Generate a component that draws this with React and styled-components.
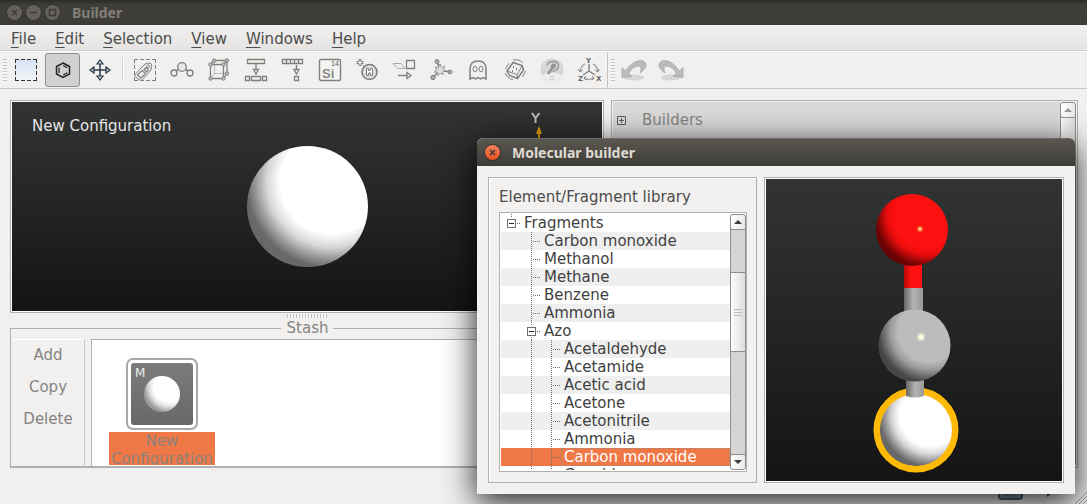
import React from 'react';
import styled, { createGlobalStyle } from 'styled-components';

const GlobalStyle = createGlobalStyle`
  * {
    box-sizing: border-box;
  }

  body {
    margin: 0;
    font-family: "DejaVu Sans", sans-serif;
    font-size: 15px;
    line-height: 18px;
    color: #4c4c4c;
    background: #f1f0ee;
  }

  button {
    font: inherit;
    color: inherit;
    border: 0;
    padding: 0;
    background: none;
    cursor: pointer;
  }
`;

// Main window
const Window = styled.div`
  position: relative;
  display: flex;
  flex-direction: column;
  min-height: 100vh;
  overflow: hidden;
`;

const TitleBar = styled.header`
  display: flex;
  align-items: center;
  gap: 4px;
  height: 25px;
  padding: 0 7px;
  background: linear-gradient(#2c2b28, #403f3b 5px, #3c3b37);
`;

const WindowTitle = styled.h1`
  margin: 0 0 0 8px;
  font-family: "Noto Sans", sans-serif;
  font-size: 14px;
  line-height: 18px;
  font-weight: 700;
  color: #817e76;
`;

const WindowButton = styled.button`
  display: flex;
  width: 15px;
  height: 15px;
  border-radius: 50%;
  background: ${props => (props.$active ? 'linear-gradient(#f58260, #e2501c)' : '#64625b')};
  box-shadow: 0 0 0 1px ${props => (props.$active ? '#35332e' : '#363530')};
  color: #3b3834;
`;

const MenuBar = styled.nav`
  display: flex;
  align-items: center;
  gap: 19px;
  height: 26px;
  padding: 3px 11px 0;
  background: linear-gradient(#f1f0ef, #e5e4e3);
  border-bottom: 1px solid #cfcecd;

  u {
    text-underline-offset: 3px;
    text-decoration-thickness: 1px;
    text-decoration-skip-ink: none;
  }
`;

const ToolRow = styled.div`
  display: flex;
  height: 38px;
  border-top: 1px solid #fff;
  border-bottom: 1px solid #c9c8c6;
`;

const ToolBar = styled.div`
  display: flex;
  align-items: center;
  gap: 2px;
  padding: 0 1px 0 3px;
  border-right: ${props => (props.$last ? '0' : '1px solid #c4c3c1')};
`;

const Handle = styled.div`
  width: 4px;
  height: 22px;
  margin-right: -1px;
  background: repeating-linear-gradient(#c2c1bf 0 1px, #f8f8f7 1px 3px);
`;

const ToolButton = styled.button`
  display: flex;
  align-items: center;
  justify-content: center;
  width: 35px;
  height: 34px;
  border: 1px solid ${props => (props.$pressed ? '#8f8e8c' : 'transparent')};
  border-radius: 3px;
  background: ${props => (props.$pressed ? '#d2d1cf' : 'none')};
`;

const Separator = styled.div`
  width: 2px;
  height: 24px;
  margin: 0 1px 0 3px;
  border-left: 1px solid #d3d2d0;
  border-right: 1px solid #fff;
`;

const Workspace = styled.main`
  display: grid;
  grid-template-columns: 594fr 467fr;
  gap: 7px;
  padding: 11px 9px 36px 10px;
`;

const LeftColumn = styled.div`
  display: flex;
  flex-direction: column;
  min-width: 0;
`;

const Frame = styled.div`
  border: 1px solid #b1b0ae;
  background: #fff;
  padding: 1px;
`;

const Viewport = styled.div`
  position: relative;
  height: 209px;
  padding: 15px 20px;
  color: #e6e6e6;
  background: linear-gradient(#323434, #141414);
  overflow: hidden;
`;

// The scene covers the viewport, below its caption
const Scene = styled.svg`
  position: absolute;
  inset: 0;
  width: 100%;
  height: 100%;
`;

const Splitter = styled.div`
  width: 40px;
  height: 4px;
  margin: 1px auto 0;
  background: repeating-linear-gradient(90deg, #c2c1bf 0 1px, #f8f8f7 1px 3px);
`;

const Stash = styled.fieldset`
  display: flex;
  gap: 6px;
  min-width: 0;
  margin: 1px 0 0;
  padding: 2px 1px 0;
  border: 1px solid #b1b0ae;
  border-bottom-width: 2px;
  color: #858482;

  legend {
    margin: 0 auto;
    padding: 0 5px 0 6px;
  }
`;

const StashTools = styled.div`
  display: flex;
  flex-direction: column;
  align-items: center;
  gap: 14px;
  width: 73px;
  padding-top: 6px;
  border-top: 1px solid #fff;
  border-right: 1px solid #c9c8c6;
`;

const StashList = styled.div`
  flex: 1;
  height: 127px;
  padding: 18px 17px 0;
  border: 1px solid #b1b0ae;
  border-bottom: 0;
  background: #fff;
  overflow: hidden;
`;

const StashItem = styled.figure`
  display: flex;
  flex-direction: column;
  align-items: center;
  width: 106px;
  margin: 0;
`;

const Thumbnail = styled.div`
  width: 72px;
  height: 72px;
  padding: 3px;
  border: 2px solid #a8a8a8;
  border-radius: 7px;

  svg {
    display: block;
    border-radius: 3px;
    background: linear-gradient(#7c7c7a, #676765);
  }
`;

const ItemLabel = styled.figcaption`
  width: 100%;
  height: 33px;
  margin-top: 2px;
  text-align: center;
  background: #f07846;
  color: #8c8279;
  overflow: hidden;
`;

const BuildersPanel = styled.section`
  display: flex;
  border: 1px solid #b1b0ae;
  padding: 1px;
`;

const BuildersHeader = styled.div`
  display: flex;
  flex: 1;
  align-items: center;
  gap: 16px;
  height: 36px;
  padding-left: 4px;
  background: #d9d9d9;
  color: #858482;
`;

const ExpandBox = styled.button`
  display: flex;
  width: 9px;
  height: 9px;
  color: #5c5c5c;
`;

const ScrollBar = styled.div`
  display: flex;
  flex-direction: column;
  width: 16px;
  border: 1px solid #8f8e8c;
  border-radius: 3px;
  background: #d6d5d3;
`;

const ScrollButton = styled.button`
  display: flex;
  align-items: center;
  justify-content: center;
  height: 14px;
  border-radius: 3px;
  background: linear-gradient(90deg, #fff, #e9e8e6);
  color: ${props => (props.$dim ? '#9b9a98' : '#3c3c3c')};
`;

const Track = styled.div`
  flex: ${props => props.$size} 0 0;
  box-shadow: ${props => (props.$first ? 'inset 0 1px #8f8e8c' : 'inset 0 -1px #8f8e8c')};
`;

const Thumb = styled.div`
  display: flex;
  align-items: center;
  justify-content: center;
  flex: ${props => props.$size} 0 0;
  border-top: 1px solid #8f8e8c;
  border-bottom: 1px solid #8f8e8c;
  background: linear-gradient(90deg, #fdfdfd, #dddcda);

  &::after {
    content: '';
    width: 8px;
    height: 7px;
    background: repeating-linear-gradient(#bdbcba 0 1px, transparent 1px 3px);
    display: ${props => (props.$grip ? 'block' : 'none')};
  }
`;

const StatusBar = styled.footer`
  position: absolute;
  right: 0;
  bottom: 0;
  display: flex;
  align-items: flex-end;
`;

// Molecular builder dialog, floating over the main window
const Dialog = styled.section`
  position: absolute;
  top: 138px;
  left: 477px;
  right: 12px;
  border-radius: 6px 6px 0 0;
  background: #f2f1ef;
  box-shadow: 0 8px 32px 1px rgba(0, 0, 0, 0.85);
`;

const DialogTitleBar = styled.header`
  display: flex;
  align-items: center;
  gap: 12px;
  height: 28px;
  padding: 0 8px;
  border-top: 1px solid #6b6963;
  border-radius: 6px 6px 0 0;
  background: linear-gradient(#5a574f, #3d3c38);
`;

const DialogTitle = styled.h2`
  margin: 0;
  font-family: "Noto Sans", sans-serif;
  font-size: 14px;
  line-height: 18px;
  font-weight: 700;
  color: #dfdbd2;
`;

const DialogBody = styled.div`
  display: grid;
  grid-template-columns: 269fr 300fr;
  gap: 7px;
  padding: 11px;
`;

const Library = styled.div`
  display: flex;
  flex-direction: column;
  gap: 6px;
  min-width: 0;
  padding: 10px 9px 10px 10px;
  border: 1px solid #b1b0ae;
  box-shadow: inset 1px 1px #fff;
`;

const LibraryTitle = styled.h3`
  margin: 0;
  font-size: 15px;
  line-height: 18px;
  font-weight: 400;
`;

const TreeFrame = styled.div`
  display: flex;
  height: 260px;
  padding: 1px 0 1px 1px;
  border: 1px solid #b1b0ae;
  background: #fff;
`;

const Tree = styled.ul`
  flex: 1;
  min-width: 0;
  margin: 0;
  padding: 0;
  list-style: none;
  color: #3f3f3f;
  overflow: hidden;
`;

const TreeRow = styled.li`
  display: flex;
  height: 18px;
  background: #fff;
  white-space: nowrap;

  &:nth-child(even) {
    background: #efefef;
  }

  &[aria-selected='true'] {
    background: #f07846;
    color: #fff;
  }
`;

const Indent = styled.svg`
  flex: none;
  width: 20px;
  height: 18px;
  color: #6e6e6e;
`;

const RowLabel = styled.span`
  flex: 1;
  padding-left: 3px;
  outline: ${props => (props.$focused ? '1px dotted #a08878' : 'none')};
  outline-offset: -1px;
`;

const Preview = styled.div`
  position: relative;
  height: 100%;
  background: linear-gradient(#323434, #141414);
`;

const menus = ['File', 'Edit', 'Selection', 'View', 'Windows', 'Help'];

const fragments = [
  { name: 'Fragments', level: 0, open: true },
  { name: 'Carbon monoxide', level: 1 },
  { name: 'Methanol', level: 1 },
  { name: 'Methane', level: 1 },
  { name: 'Benzene', level: 1 },
  { name: 'Ammonia', level: 1 },
  { name: 'Azo', level: 1, open: true },
  { name: 'Acetaldehyde', level: 2 },
  { name: 'Acetamide', level: 2 },
  { name: 'Acetic acid', level: 2 },
  { name: 'Acetone', level: 2 },
  { name: 'Acetonitrile', level: 2 },
  { name: 'Ammonia', level: 2 },
  { name: 'Carbon monoxide', level: 2 },
  { name: 'Cyanide', level: 2 },
];

const icons = {
  select: (
    <>
      <defs>
        <linearGradient id="sel" x2="0" y2="1">
          <stop stopColor="#d5e3f3" />
          <stop offset="1" stopColor="#f4f5f7" />
        </linearGradient>
      </defs>
      <path d="M1 1h22v22H1z" fill="url(#sel)" stroke="none" />
      <path d="M1 1.500h22M1 22.500h22M1.500 1v22M22.500 1v22" stroke="#333" strokeDasharray="4 2" />
    </>
  ),
  builder: (
    <g stroke="#222" strokeWidth="1.5">
      <path d="M12 5l6.500 3.500v7.500L12 19.500 5.500 16V8.500z" />
      <path d="M8 9.500v5.500M12.200 7.500l4 2.300M12.200 17l4-2.300" strokeWidth="1.2" />
    </g>
  ),
  move: (
    <g stroke="#2b3a48" strokeWidth="1.2" fill="#c9d4df">
      <path d="M12 5v14M5 12h14" strokeWidth="1.500" />
      <path d="M12 2l-3 4h6zM12 22l-3-4h6zM2 12l4-3v6zM22 12l-4-3v6z" />
    </g>
  ),
  tag: (
    <>
      <path d="M1 1.500h22M1 22.500h22M1.500 1v22M22.500 1v22" strokeDasharray="4 2" />
      <path d="M1.500 17L12 6q4-1.500 6-.5 1.500 2 0 6.500L8.500 22.500q-5-1-7-5.500z" fill="#efefed" />
      <circle cx="15" cy="8.500" r="1.500" />
      <path d="M4.500 17L9 12.500l3.500 3L8 20zM11 11.500l2-2 2.500 2.500-2 2z" strokeWidth="1.2" />
    </>
  ),
  chain: (
    <g strokeWidth="1.300">
      <circle cx="12" cy="9" r="4.300" fill="#e6e6e4" />
      <circle cx="4" cy="15" r="3" />
      <circle cx="20" cy="15" r="3" />
      <path d="M6.500 13L8 11M17.500 13L16 11" />
    </g>
  ),
  cell: (
    <>
      <path d="M7.500 4v11.500H19M4 20l3.500-4.500" stroke="#bbb" />
      <path d="M3.500 6.500h13v14h-13zM3.500 6.500L7 2.500h13v13l-3.500 5M16.500 6.500L20 2.500" strokeWidth="1.300" />
      <g fill="#c4c4c2">
        <circle cx="3.500" cy="6.500" r="1.700" />
        <circle cx="16.500" cy="6.500" r="1.700" />
        <circle cx="3.500" cy="20.500" r="1.700" />
        <circle cx="16.500" cy="20.500" r="1.700" />
        <circle cx="20" cy="2.500" r="1.700" />
        <circle cx="7" cy="2.500" r="1.700" />
        <circle cx="20" cy="15.500" r="1.700" />
      </g>
    </>
  ),
  split: (
    <g strokeWidth="1.300">
      <path d="M3.500 1.500h17v4h-17zM12 6v6M9.500 11.500h5L12 16zM1.500 18.500h4v4h-4zM7.500 18.500h9v4h-9zM18.500 18.500h4v4h-4z" />
    </g>
  ),
  merge: (
    <g strokeWidth="1.300">
      <path d="M1.500 1.500h20v4h-20zM5.500 2v3M9.500 2v3M13.500 2v3M17.500 2v3M15.500 7v5M13 11.500h5L15.500 16zM13.500 18.500h4v4h-4z" />
    </g>
  ),
  element: (
    <>
      <rect x="1.500" y="1.500" width="21" height="21" rx="1.500" fill="#f5f5f4" strokeWidth="1.400" />
      <text x="4" y="20" fontSize="13" fontWeight="700" fontFamily="Liberation Sans, sans-serif" fill="#858583" stroke="none">Si</text>
      <text x="13" y="8" fontSize="7" fontFamily="Liberation Sans, sans-serif" fill="#555" stroke="none">14</text>
    </>
  ),
  hydrogen: (
    <>
      <circle cx="14.500" cy="14" r="7.500" strokeWidth="1.600" fill="#dededc" />
      <path d="M11.500 10.500h2v2h2v-2h2v7h-2v-2.500h-2v2.500h-2z" fill="#fff" />
      <path d="M4 1.500h2v2h2v2H6v2H4v-2H2v-2h2zM7.500 7l2 2" fill="#fff" />
    </>
  ),
  transform: (
    <>
      <path d="M1 5.500h8l4 5H6z" stroke="#aaa" />
      <path d="M14.500 2.500h8v8h-8zM6 17.500h9M15 14.500v6l4-3z" strokeWidth="1.300" />
    </>
  ),
  network: (
    <>
      <path d="M11 12L8 3.500M11 12L4 19.500M11 12l10 2" strokeWidth="1.600" />
      <path d="M11 6l1.400 3.200L16 8l-1.600 3.200L17 13l-3.200.8L14 17l-2.500-2L9 18l-.5-3.500L5 14l3-2-2-3 3.500.5z" fill="#ddd" strokeDasharray="2 1" />
      <circle cx="8" cy="3.500" r="2" fill="#aaa" />
      <circle cx="4" cy="19.500" r="2.200" fill="#aaa" />
      <circle cx="21" cy="14" r="2" fill="#aaa" />
    </>
  ),
  ghost: (
    <>
      <path d="M4 21V11q0-8 8-8t8 8v10l-3-1.500-2.500 1.500-2.500-1.500-2.500 1.500L7 19.500z" strokeWidth="1.500" />
      <ellipse cx="9" cy="11" rx="2" ry="2.800" />
      <ellipse cx="15" cy="11" rx="2" ry="2.800" />
    </>
  ),
  dice: (
    <>
      <path d="M4 13l6-8.500 9 3 1.500 4.500-6 8.500-8-3z" fill="#eee" strokeWidth="1.500" />
      <path d="M19 8l-5 8.500M14 16.500l.5 4M4 13l10 3.500" />
      <path d="M2.500 11l3-5.500M2 15l3 4.500q3 2 5 2M10 2q7-1 10 3M22.500 13l-3 6" />
      <path d="M10 9h1M13 11h1M9 13h1" strokeWidth="1.800" />
    </>
  ),
  probe: (
    <>
      <circle cx="12" cy="12" r="11.500" fill="#d6d6d4" stroke="none" />
      <path d="M2 17q10-5 20 0-4 6.500-10 6.500T2 17z" fill="#eeeeed" stroke="none" />
      <path d="M7 7.500q1-4 6-4 5.500 0 5.500 4.500 0 4-6 5.500" stroke="#a2a2a0" strokeWidth="1.800" />
      <path d="M13 9L8 16" stroke="#979795" strokeWidth="2.800" />
      <circle cx="13.500" cy="8" r="2" fill="#999" stroke="#8a8a88" />
      <circle cx="12" cy="20" r="1.800" fill="#fff" stroke="#c4c4c2" />
    </>
  ),
  axes: (
    <>
      <path d="M12 6v7M12 13l-6 4M12 13l6 4" strokeWidth="1.300" />
      <path d="M8 6q-4 2-5 7M16 6q4 2 5 7M7 20q5 3 10 0" stroke="#aaa" strokeWidth="1.600" />
      <path d="M1 11l2 3 3-2M18 12l3 2 1-3M9 18l-2 2 2 2M15 18l2 2-2 2" />
      <g fontSize="7" fontWeight="700" fontFamily="DejaVu Sans, sans-serif" fill="#666" stroke="none">
        <text x="9" y="5">Y</text>
        <text x="1" y="23">Z</text>
        <text x="19" y="23">X</text>
      </g>
    </>
  ),
  undo: (
    <>
      <ellipse cx="12" cy="19.500" rx="10" ry="3" fill="#c9c9c7" stroke="none" opacity=".7" />
      <path d="M0 9.500v10l10-1.500-3.500-2q3-7 9.500-8 5-.5 2 7 7-5 6-9-3-6-12-1.500-5 3-8.500 8.500z" fill="#bcbcba" stroke="#a6a6a4" strokeWidth=".8" />
    </>
  ),
};
icons.redo = <g transform="matrix(-1 0 0 1 24 0)">{icons.undo}</g>;

const tools = [
  ['Tag selection', 'tag'],
  ['Chain', 'chain'],
  ['Unit cell', 'cell'],
  ['Split', 'split'],
  ['Merge', 'merge'],
  ['Element', 'element'],
  ['Add hydrogen', 'hydrogen'],
  ['Transform', 'transform'],
  ['Network', 'network'],
  ['Ghost atoms', 'ghost'],
  ['Randomize', 'dice'],
  ['Probe', 'probe'],
  ['Axes', 'axes'],
];

function Tool({ label, icon, pressed }) {
  return (
    <ToolButton aria-label={label} aria-pressed={pressed} $pressed={pressed}>
      <svg width="24" height="24" fill="none" stroke="#7f7f7d" overflow="visible">
        {icons[icon]}
      </svg>
    </ToolButton>
  );
}

function Glyph({ d, size = 15 }) {
  return (
    <svg width={size} height={size} fill="none" stroke="currentColor" strokeWidth="1.4">
      <path d={d} />
    </svg>
  );
}

function Arrow({ down }) {
  return (
    <svg width="8" height="4">
      <path d={down ? 'M0 0h8L4 4z' : 'M0 4h8L4 0z'} fill="currentColor" />
    </svg>
  );
}

// A lit ball: the light comes from the upper right
function Ball({ id, cx, cy, r, colors }) {
  const [lit, mid, low, dark] = colors;
  return (
    <>
      <radialGradient id={id} gradientUnits="userSpaceOnUse" cx={cx + r * 0.4} cy={cy - r * 0.4} r={r * 1.57}>
        <stop offset=".54" stopColor={lit} />
        <stop offset=".68" stopColor={mid} />
        <stop offset=".8" stopColor={low} />
        <stop offset=".9" stopColor={dark} />
      </radialGradient>
      <circle cx={cx} cy={cy} r={r} fill={`url(#${id})`} />
    </>
  );
}

const white = ['#fff', '#d8d8d8', '#999', '#686868'];
const red = ['#ff1010', '#ee0e0e', '#a80808', '#6a0303'];
const gray = ['#bcbcbc', '#9c9c9c', '#6c6c6c', '#464646'];

function Molecule() {
  return (
    <Scene viewBox="0 0 296 302" role="img" aria-label="Carbon monoxide fragment">
      <defs>
        <linearGradient id="bondGray">
          <stop stopColor="#666" />
          <stop offset=".5" stopColor="#b4b4b4" />
          <stop offset="1" stopColor="#999" />
        </linearGradient>
        <linearGradient id="bondRed">
          <stop stopColor="#b80808" />
          <stop offset=".4" stopColor="#ff1010" />
        </linearGradient>
        <radialGradient id="glint">
          <stop offset=".3" stopColor="#fffbe0" />
          <stop offset="1" stopColor="#fffbe0" stopOpacity="0" />
        </radialGradient>
        <radialGradient id="glintWarm">
          <stop offset=".2" stopColor="#ffd890" />
          <stop offset="1" stopColor="#ff6020" stopOpacity="0" />
        </radialGradient>
      </defs>
      <rect x="138" y="80" width="18" height="30" fill="url(#bondRed)" />
      <rect x="138" y="109" width="19" height="28" fill="url(#bondGray)" />
      <Ball id="oxygen" cx={146} cy={51} r={36} colors={red} />
      <circle cx="154" cy="50" r="4" fill="url(#glintWarm)" />
      <circle cx="150" cy="251" r="39" fill="none" stroke="#ffba08" strokeWidth="7" />
      <Ball id="hydrogenAtom" cx={150} cy={251} r={36} colors={white} />
      <path d="M140 196h18v21q-9 3-18 0z" fill="url(#bondGray)" />
      <Ball id="carbon" cx={148.5} cy={166.5} r={36} colors={gray} />
      <circle cx="155" cy="158" r="5" fill="url(#glint)" />
    </Scene>
  );
}

function branchPath(item, column) {
  if (column < item.level) {
    return column > 0 ? 'M10.500 0v18' : '';
  }
  if (!item.open) {
    return 'M10.500 0v18M12 9.500h8';
  }
  return column === 0 ? 'M10.500 0v4M16 9.500h4' : 'M10.500 0v4M10.500 15v3M16 9.500h4';
}

function TreeItem({ item, selected, onSelect }) {
  const columns = Array.from({ length: item.level + 1 }, (_, i) => i);

  return (
    <TreeRow
      role="treeitem"
      aria-level={item.level + 1}
      aria-selected={selected}
      aria-expanded={item.open}
      onClick={onSelect}
    >
      {columns.map(column => (
        <Indent key={column} fill="none" stroke="currentColor">
          <path d={branchPath(item, column)} strokeDasharray="1 1" />
          {column === item.level && item.open && (
            <>
              <rect x="6.500" y="5.500" width="8" height="8" fill="#fff" />
              <path d="M8 9.500h5" stroke="#222" />
            </>
          )}
        </Indent>
      ))}
      <RowLabel $focused={selected}>{item.name}</RowLabel>
    </TreeRow>
  );
}

function MolecularBuilder() {
  const [selected, setSelected] = React.useState(13);

  return (
    <Dialog role="dialog" aria-labelledby="dialog-title">
      <DialogTitleBar>
        <WindowButton $active aria-label="Close dialog">
          <Glyph d="M5 5l5 5M10 5l-5 5" />
        </WindowButton>
        <DialogTitle id="dialog-title">Molecular builder</DialogTitle>
      </DialogTitleBar>
      <DialogBody>
        <Library>
          <LibraryTitle>Element/Fragment library</LibraryTitle>
          <TreeFrame>
            <Tree role="tree" aria-label="Element/Fragment library">
              {fragments.map((item, i) => (
                <TreeItem key={i} item={item} selected={i === selected} onSelect={() => setSelected(i)} />
              ))}
            </Tree>
            <ScrollBar>
              <ScrollButton aria-label="Scroll up"><Arrow /></ScrollButton>
              <Track $size={44} $first />
              <Thumb $size={79} $grip />
              <Track $size={105} />
              <ScrollButton aria-label="Scroll down"><Arrow down /></ScrollButton>
            </ScrollBar>
          </TreeFrame>
        </Library>
        <Frame>
          <Preview>
            <Molecule />
          </Preview>
        </Frame>
      </DialogBody>
    </Dialog>
  );
}

function App() {
  return (
    <Window>
      <GlobalStyle />
      <TitleBar>
        <WindowButton aria-label="Close"><Glyph d="M5 5l5 5M10 5l-5 5" /></WindowButton>
        <WindowButton aria-label="Minimize"><Glyph d="M4 7.500h7" /></WindowButton>
        <WindowButton aria-label="Maximize"><Glyph d="M4.500 4.500h6v6h-6z" /></WindowButton>
        <WindowTitle>Builder</WindowTitle>
      </TitleBar>
      <MenuBar>
        {menus.map(name => (
          <button key={name}><u>{name[0]}</u>{name.slice(1)}</button>
        ))}
      </MenuBar>
      <ToolRow>
        <ToolBar role="toolbar" aria-label="Tools">
          <Handle />
          <Tool label="Select" icon="select" />
          <Tool label="Molecular builder" icon="builder" pressed />
          <Tool label="Move" icon="move" />
          <Separator />
          {tools.map(([label, icon]) => (
            <Tool key={icon} label={label} icon={icon} />
          ))}
        </ToolBar>
        <ToolBar role="toolbar" aria-label="History" $last>
          <Handle />
          <Tool label="Undo" icon="undo" />
          <Tool label="Redo" icon="redo" />
        </ToolBar>
      </ToolRow>
      <Workspace>
        <LeftColumn>
          <Frame>
            <Viewport>
              New Configuration
              <Scene viewBox="0 0 590 209" aria-hidden="true">
                <Ball id="atom" cx={295.5} cy={104.5} r={60.5} colors={white} />
                <path d="M520 11l3.500 5v5M527.500 11l-4 5" stroke="#bdbdbd" strokeWidth="2" fill="none" />
                <path d="M527 24l-3 8h2v40h2V32h2z" fill="#e5a00d" />
              </Scene>
            </Viewport>
          </Frame>
          <Splitter />
          <Stash>
            <legend>Stash</legend>
            <StashTools>
              <button>Add</button>
              <button>Copy</button>
              <button>Delete</button>
            </StashTools>
            <StashList>
              <StashItem>
                <Thumbnail>
                  <svg width="62" height="62" aria-hidden="true">
                    <Ball id="thumb" cx={31} cy={31} r={18} colors={['#fff', '#e6e6e6', '#c0c0c0', '#9a9a98']} />
                    <text x="4" y="14" fontSize="12" fill="#eee">M</text>
                  </svg>
                </Thumbnail>
                <ItemLabel>New Configuration</ItemLabel>
              </StashItem>
            </StashList>
          </Stash>
        </LeftColumn>
        <BuildersPanel>
          <BuildersHeader>
            <ExpandBox aria-label="Expand builders">
              <svg width="9" height="9" fill="none" stroke="currentColor">
                <path d="M.5.5h8v8h-8zM2 4.500h5M4.500 2v5" />
              </svg>
            </ExpandBox>
            Builders
          </BuildersHeader>
          <ScrollBar>
            <ScrollButton $dim aria-label="Scroll up"><Arrow /></ScrollButton>
            <Thumb $size={1} />
          </ScrollBar>
        </BuildersPanel>
      </Workspace>
      <StatusBar>
        <svg width="90" height="34" aria-hidden="true">
          <path d="M3 12h22v14q0 3-3 3H5q-3 0-3-3z" fill="#8ba3b8" stroke="#41607d" strokeWidth="2" />
          <path d="M8 24h12M8 26h9" stroke="#4c6a86" />
          <path d="M50 14v13l9-8z" fill="#1c4f91" />
          <path d="M78 34l12-12M82 34l8-8M86 34l4-4" stroke="#a5a4a2" />
        </svg>
      </StatusBar>
      <MolecularBuilder />
    </Window>
  );
}

export default App;
